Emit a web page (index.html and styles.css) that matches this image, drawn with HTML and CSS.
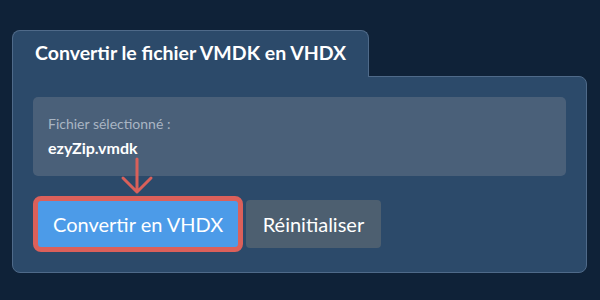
FILE: index.html
```html
<!DOCTYPE html>
<html lang="fr">
<head>
<meta charset="utf-8">
<title>Convertir VMDK en VHDX</title>
<link rel="stylesheet" href="styles.css">
</head>
<body>
<div class="card">
  <div class="tab"><h1 class="title">Convertir le fichier VMDK en VHDX</h1></div>
  <div class="panel">
    <div class="info">
      <div class="label">Fichier sélectionné :</div>
      <div class="filename">ezyZip.vmdk</div>
    </div>
    <div class="actions">
      <button class="btn btn-primary">Convertir en VHDX</button>
      <button class="btn btn-secondary">Réinitialiser</button>
    </div>
    <svg class="pointer" width="34" height="40" viewBox="0 0 34 40" aria-hidden="true">
      <path d="M17 2 V35 M3 21 L17 35 L31 21" fill="none" stroke="#d9605a" stroke-width="3" stroke-linecap="round" stroke-linejoin="round"/>
    </svg>
  </div>
</div>
</body>
</html>
```

FILE: styles.css
```css
html, body {
  margin: 0;
  padding: 0;
  background: #0f2238;
  font-family: Lato, "Open Sans", sans-serif;
}

.card {
  margin: 30px 13px 0 12px;
}

.tab {
  display: inline-block;
  position: relative;
  z-index: 1;
  box-sizing: border-box;
  height: 47px;
  padding: 10px 22px 0 22px;
  margin-bottom: -1px;
  background: #2c4a6a;
  border: 1px solid #4f6a89;
  border-bottom: none;
  border-radius: 8px 8px 0 0;
}

.title {
  margin: 0;
  font-size: 19.5px;
  line-height: 24px;
  font-weight: 700;
  color: #ffffff;
  white-space: nowrap;
}

.panel {
  position: relative;
  background: #2c4a6a;
  border: 1px solid #4f6a89;
  border-radius: 0 8px 8px 8px;
  padding: 20px 20px 24px 20px;
}

.info {
  background: #4a6079;
  border-radius: 5px;
  padding: 18px 15px 19px 15px;
}

.label {
  font-size: 14px;
  line-height: 17px;
  color: #a9b5c3;
}

.filename {
  margin-top: 6px;
  font-size: 16px;
  line-height: 19px;
  font-weight: 700;
  color: #ffffff;
}

.actions {
  display: flex;
  gap: 7px;
  margin: 24px 0 0 4px;
}

.btn {
  height: 48px;
  border: none;
  border-radius: 4px;
  font-family: Lato, "Open Sans", sans-serif;
  font-size: 20px;
  color: #ffffff;
}

.btn-primary {
  padding: 0 16px;
  background: #4c9be8;
  outline: 5px solid #dc605a;
  outline-offset: -1px;
}

.btn-secondary {
  padding: 0 16.5px;
  background: #4d5f70;
}

.pointer {
  position: absolute;
  left: 107px;
  top: 80px;
}
```
